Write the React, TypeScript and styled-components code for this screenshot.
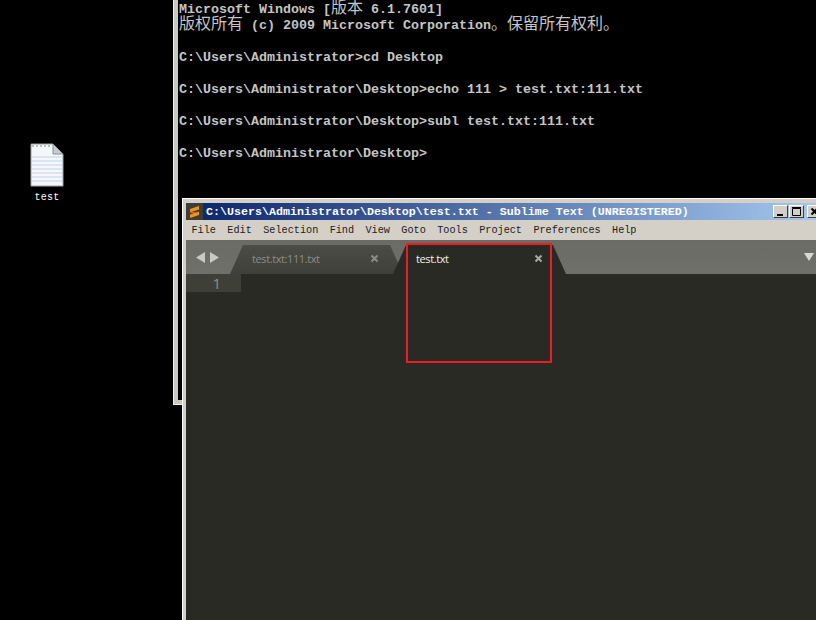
import styled, { createGlobalStyle } from 'styled-components';

const GlobalStyle = createGlobalStyle`
  html, body {
    margin: 0;
    padding: 0;
    background: #000;
  }
`;

const Desktop = styled.div`
  position: relative;
  width: 816px;
  height: 620px;
  overflow: hidden;
  background: #000;
`;

const DesktopIcon = styled.div`
  position: absolute;
  left: 22px;
  top: 143px;
  width: 50px;
  display: flex;
  flex-direction: column;
  align-items: center;
  gap: 5px;
`;

const IconLabel = styled.span`
  font-family: 'Liberation Mono', monospace;
  font-size: 10px;
  line-height: 12px;
  letter-spacing: 0.2px;
  color: #fff;
`;

const ConsoleWindow = styled.div`
  position: absolute;
  left: 173px;
  top: -4px;
  width: 700px;
  height: 409px;
  box-sizing: border-box;
  background: #000;
  border-left: 1px solid #f2f2ee;
  border-bottom: 1px solid #f2f2ee;
`;

const ConsoleFrame = styled.div`
  height: 100%;
  box-sizing: border-box;
  border-left: 4px solid #c9c7bf;
  border-bottom: 4px solid #c9c7bf;
  padding: 6px 0 0 1px;
`;

const ConsoleLine = styled.div`
  height: 16px;
  font-family: 'Liberation Mono', 'Noto Sans CJK SC', monospace;
  font-size: 13.33px;
  font-weight: 700;
  line-height: 16px;
  white-space: pre;
  color: #c4c4c4;
`;

const Cjk = styled.span`
  font-family: 'Noto Sans CJK SC', sans-serif;
  font-size: 16px;
  font-weight: 400;
  line-height: 0;
`;

const SublimeWindow = styled.div`
  position: absolute;
  left: 182px;
  top: 198px;
  width: 642px;
  height: 430px;
  box-sizing: border-box;
  display: flex;
  flex-direction: column;
  border: 1px solid #fff;
  border-width: 1px 0 0 1px;
  background: #d4d0c8;
  padding: 4px 0 0 3px;
`;

const TitleBar = styled.div`
  height: 17px;
  display: flex;
  align-items: center;
  gap: 3px;
  padding-right: 2px;
  background: linear-gradient(90deg, #0a246a 0%, #a6caf0 100%);
`;

const TitleText = styled.span`
  font-family: 'Liberation Mono', monospace;
  font-size: 11.67px;
  font-weight: 700;
  color: #fff;
  white-space: pre;
`;

const WindowControls = styled.div`
  margin-left: auto;
  display: flex;
  align-items: center;
`;

const ControlButton = styled.div<{ $gapLeft?: number }>`
  width: 15px;
  height: 13px;
  box-sizing: border-box;
  margin-left: ${(p) => p.$gapLeft ?? 0}px;
  background: #d4d0c8;
  border: 1px solid;
  border-color: #fff #404040 #404040 #fff;
  display: flex;
  align-items: center;
  justify-content: center;
`;

const MenuBar = styled.div`
  height: 20px;
  display: flex;
  align-items: center;
  gap: 11.4px;
  padding-left: 5.5px;
  background: #d4d0c8;
  font-family: 'Liberation Mono', monospace;
  font-size: 10.2px;
  color: #1c1c1c;
`;

const TabStrip = styled.div`
  height: 34px;
  display: flex;
  align-items: flex-end;
  background: linear-gradient(180deg, #6a6b65 0%, #6f706a 100%);
`;

const NavArrows = styled.div`
  width: 44px;
  height: 100%;
  flex: none;
  display: flex;
  align-items: center;
  gap: 5px;
  padding-left: 10px;
  box-sizing: border-box;
`;

const Tab = styled.div<{ $active?: boolean }>`
  position: relative;
  z-index: ${(p) => (p.$active ? 2 : 1)};
  width: 173px;
  height: 29px;
  flex: none;
  box-sizing: border-box;
  margin-left: ${(p) => (p.$active ? '-10px' : '0')};
  padding: 0 ${(p) => (p.$active ? '23px' : '24px')} 3px ${(p) => (p.$active ? '23px' : '22px')};
  display: flex;
  align-items: center;
  justify-content: space-between;
  clip-path: polygon(13px 0, calc(100% - 13px) 0, 100% 100%, 0 100%);
  background: ${(p) =>
    p.$active ? '#292a24' : 'linear-gradient(180deg, #4b4c46 0%, #3f403a 100%)'};
  color: ${(p) => (p.$active ? '#f2f2ee' : '#8c8d87')};
`;

const TabName = styled.span`
  font-family: 'Open Sans', sans-serif;
  font-size: 11px;
  letter-spacing: -0.4px;
`;

const DropdownArrow = styled.div`
  margin-left: auto;
  align-self: center;
  margin-right: 10px;
  width: 0;
  height: 0;
  border-left: 5px solid transparent;
  border-right: 5px solid transparent;
  border-top: 8px solid #d8d8d4;
`;

const Editor = styled.div`
  flex: 1;
  background: #292a24;
`;

const ActiveLine = styled.div`
  width: 55px;
  height: 18px;
  box-sizing: border-box;
  background: #3e3f37;
  padding-right: 20px;
  text-align: right;
  font-family: 'Open Sans', sans-serif;
  font-size: 15px;
  line-height: 18px;
  color: #8f908a;
`;

const Highlight = styled.div`
  position: absolute;
  left: 406px;
  top: 243px;
  width: 146px;
  height: 120px;
  box-sizing: border-box;
  border: 2px solid #ed1c24;
  z-index: 3;
`;

const menuItems = ['File', 'Edit', 'Selection', 'Find', 'View', 'Goto', 'Tools', 'Project', 'Preferences', 'Help'];

function FileIcon() {
  return (
    <svg width="34" height="44" viewBox="0 0 34 44">
      <path d="M1 1H23L33 11V43H1Z" fill="#f4f7fb" stroke="#9a9ea6" />
      <path d="M23 1V11H33Z" fill="#c5cbd3" stroke="#8a8e96" />
      <path d="M2 43.5H33" stroke="#55585e" />
      {[14, 18, 22, 26, 30, 34, 38].map((y) => (
        <path key={y} d={`M2 ${y}H32`} stroke="#c3d3e6" />
      ))}
      {[3, 7, 11, 15, 19].map((x) => (
        <circle key={x} cx={x} cy="3" r="1" fill="#a8adb5" />
      ))}
    </svg>
  );
}

function SublimeLogo() {
  return (
    <svg width="17" height="17" viewBox="0 0 17 17">
      <rect width="17" height="17" fill="#3e3d37" />
      <path d="M4 6L13 3V6.5L4 9.5Z" fill="#f5921e" />
      <path d="M4 8L13 10.5V12L4 9.5Z" fill="#c9761a" />
      <path d="M4 11.5L13 8.5V12L4 15Z" fill="#f5921e" />
    </svg>
  );
}

function CloseGlyph({ color }: { color: string }) {
  return (
    <svg width="9" height="9" viewBox="0 0 9 9">
      <path d="M1.5 1.5L7.5 7.5M7.5 1.5L1.5 7.5" stroke={color} strokeWidth="2" />
    </svg>
  );
}

function NavArrow({ dir }: { dir: 'left' | 'right' }) {
  return (
    <svg width="9" height="11" viewBox="0 0 9 11">
      <path d={dir === 'left' ? 'M9 0V11L0 5.5Z' : 'M0 0V11L9 5.5Z'} fill="#c8c8c4" />
    </svg>
  );
}

export default function App() {
  return (
    <Desktop>
      <GlobalStyle />
      <DesktopIcon>
        <FileIcon />
        <IconLabel>test</IconLabel>
      </DesktopIcon>

      <ConsoleWindow>
        <ConsoleFrame>
          <ConsoleLine>
            Microsoft Windows [<Cjk>版本</Cjk> 6.1.7601]
          </ConsoleLine>
          <ConsoleLine>
            <Cjk>版权所有</Cjk> (c) 2009 Microsoft Corporation<Cjk>。保留所有权利。</Cjk>
          </ConsoleLine>
          <ConsoleLine />
          <ConsoleLine>C:\Users\Administrator&gt;cd Desktop</ConsoleLine>
          <ConsoleLine />
          <ConsoleLine>C:\Users\Administrator\Desktop&gt;echo 111 &gt; test.txt:111.txt</ConsoleLine>
          <ConsoleLine />
          <ConsoleLine>C:\Users\Administrator\Desktop&gt;subl test.txt:111.txt</ConsoleLine>
          <ConsoleLine />
          <ConsoleLine>C:\Users\Administrator\Desktop&gt;</ConsoleLine>
        </ConsoleFrame>
      </ConsoleWindow>

      <SublimeWindow>
        <TitleBar>
          <SublimeLogo />
          <TitleText>C:\Users\Administrator\Desktop\test.txt - Sublime Text (UNREGISTERED)</TitleText>
          <WindowControls>
            <ControlButton>
              <svg width="9" height="9" viewBox="0 0 9 9">
                <rect x="1" y="7" width="6" height="2" fill="#000" />
              </svg>
            </ControlButton>
            <ControlButton $gapLeft={1}>
              <svg width="9" height="9" viewBox="0 0 9 9">
                <path d="M0.5 1.5H8.5V8.5H0.5Z" fill="none" stroke="#000" />
                <path d="M0 0.5H9" stroke="#000" />
              </svg>
            </ControlButton>
            <ControlButton $gapLeft={3}>
              <CloseGlyph color="#000" />
            </ControlButton>
          </WindowControls>
        </TitleBar>
        <MenuBar>
          {menuItems.map((item) => (
            <span key={item}>{item}</span>
          ))}
        </MenuBar>
        <TabStrip>
          <NavArrows>
            <NavArrow dir="left" />
            <NavArrow dir="right" />
          </NavArrows>
          <Tab>
            <TabName>test.txt:111.txt</TabName>
            <CloseGlyph color="#8c8d87" />
          </Tab>
          <Tab $active>
            <TabName>test.txt</TabName>
            <CloseGlyph color="#a8a8a4" />
          </Tab>
          <DropdownArrow />
        </TabStrip>
        <Editor>
          <ActiveLine>1</ActiveLine>
        </Editor>
      </SublimeWindow>

      <Highlight />
    </Desktop>
  );
}
